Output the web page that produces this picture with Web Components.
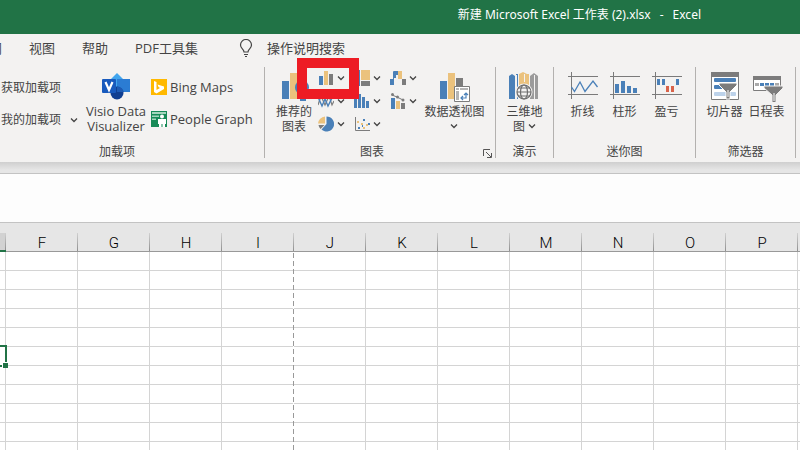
<!DOCTYPE html>
<html lang="zh-CN">
<head>
<meta charset="utf-8">
<title>新建 Microsoft Excel 工作表 (2).xlsx - Excel</title>
<style>
html, body { height: 100%; margin: 0; }
body { font: 12px/16px "Open Sans", "Noto Sans CJK SC", sans-serif; color: #444; background: #fff; overflow: hidden; }
</style>
</head>
<body>
<excel-window></excel-window>
<script>
const BLUE = '#4a80b8', YEL = '#ebc27d', GREY = '#7c7c7c';
const axes = '<path d="M1 6.5h30M1 24.5h30M4.5 2v27" stroke="#7a7a7a" fill="none"/>';
const ICONS = {
  bulb: [14, 18, '<path d="M5 13c0-3-3.500-3.500-3.500-7a5.500 5.500 0 0 1 11 0c0 3.500-3.500 4-3.500 7zM5 15.500h4M6 17.500h2" fill="none" stroke="#444" stroke-width="1.200"/>'],
  chevron: [8, 8, '<path d="M1 2.500 4 5.500 7 2.500" fill="none" stroke="#444" stroke-width="1.300"/>'],
  launcher: [9, 9, '<path d="M.5 7V.5H7M3 3l5 5M8.500 4v4.500H4" fill="none" stroke="#555"/>'],
  visio: [32, 32, '<path d="M17 3 27 13 17 23 7 13z" fill="#41a5ee"/><path d="M17 9h13v13H17z" fill="#2b7cd3"/><circle cx="17" cy="23" r="6.500" fill="#103f91"/><path d="M17 16.500V22h6.500A6.500 6.500 0 0 0 17 16.500z" fill="#1c5ab4"/><rect x="2" y="9" width="14" height="14" rx="1" fill="#185abd"/><path d="m5.500 12 3.500 8 3.500-8" fill="none" stroke="#fff" stroke-width="2.200"/>'],
  bing: [16, 16, '<path d="M0 0h16v16H0z" fill="#ffb900"/><path d="m3 2 2.500 1v8l-2.500 2zm0 11 2.500-2L9 9 7.500 8 6.500 5.500 13 7.500V10l-7.500 4.500z" fill="#fff"/>'],
  people: [16, 16, '<path d="M0 0h16v16H0z" fill="#178a57"/><path d="M1 1h14v2H1zM1 4.500h7v1.500H1zM1 7.500h4v1.500H1z" fill="#a5d5bd"/><circle cx="11" cy="5.500" r="2" fill="#fff"/><path d="M7 8h8v5h-1v3h-2.500v-3h-1v3H8v-3H7z" fill="#fff"/>'],
  recommend: [32, 32, `<path d="M4 11h7v18H4z" fill="${BLUE}"/><path d="M12 3h8v26h-8z" fill="${YEL}"/><circle cx="24" cy="17.500" r="7" fill="${BLUE}"/><path d="M22 24h6v7h-6z" fill="${BLUE}"/>`],
  column: [16, 16, `<path d="M1 6h4v9H1z" fill="${BLUE}"/><path d="M6 1h4v14H6z" fill="${YEL}"/><path d="M11 4h4v11h-4z" fill="${GREY}"/>`],
  treemap: [16, 16, `<path d="M0 0h6v16H0z" fill="${BLUE}"/><path d="M7 0h9v10H7z" fill="${YEL}"/><path d="M7 11h9v5H7z" fill="${GREY}"/>`],
  waterfall: [16, 16, `<path d="M0 9h4v6H0zM4 2h4v3H6v3H4z" fill="${BLUE}"/><path d="M8 1h4v8H8z" fill="${YEL}"/><path d="M12 9h4v6h-4z" fill="${GREY}"/><path d="M3.500 9V1.500H8" stroke="${BLUE}" fill="none"/>`],
  line: [16, 16, `<path d="m0 12 3-9 4 9 4-9 3 9 2-4" fill="none" stroke="${GREY}" stroke-width="1.200"/><path d="m0 4 4 9 3-7 3 7 4-8 2-2" fill="none" stroke="${BLUE}" stroke-width="1.400"/>`],
  histogram: [16, 16, `<path d="M0 5h3v10H0zM4 1h3v14H4zM8 4h3v11H8zM12 8h3v7h-3z" fill="${BLUE}"/>`],
  combo: [16, 16, `<path d="M1 5h4v11H1z" fill="${BLUE}"/><path d="M6 8h4v8H6z" fill="${YEL}"/><path d="M11 10h4v6h-4z" fill="${GREY}"/><path d="m2 2 5 2 6 3" fill="none" stroke="${GREY}"/><circle cx="2.500" cy="1.500" r="1.500" fill="${GREY}"/><circle cx="7.500" cy="4" r="1.500" fill="${GREY}"/><circle cx="13" cy="7" r="1.500" fill="${GREY}"/>`],
  pie: [16, 16, `<path d="M8.500 8V.5A7.500 7.500 0 1 1 3.500 13.500z" fill="${BLUE}"/><path d="M7 7.500H0A7.500 7.500 0 0 1 7 .5z" fill="${YEL}"/><path d="M6.500 9H.5a7 7 0 0 0 2 4z" fill="${GREY}"/>`],
  scatter: [16, 16, `<path d="M1.500 1v13.500H16" fill="none" stroke="${GREY}"/><path d="M3 5h2v2H3zM7 7h2v2H7zM12 8h2v2h-2zM9 11h2v2H9z" fill="${YEL}"/><path d="M9 3h2v2H9zM14 7h2v2h-2zM4 11h2v2H4zM8 9h1v2H8z" fill="${BLUE}"/>`],
  pivot: [32, 32, `<path d="M1 11h7v18H1z" fill="${BLUE}"/><path d="M9 3h7v26H9z" fill="${YEL}"/><path d="M17 8h7v8h-7z" fill="${GREY}"/><path d="M15.500 16.500h15v15h-15z" fill="#fff" stroke="${GREY}"/><path d="M17 18h3v2h-3zM21 18h8v2h-8zM17 21h3v9h-3z" fill="#b5b5b5"/><path d="M22 28h5v-5M24 26l-2 2 2 2M25 25l2-2 2 2" fill="none" stroke="${BLUE}" stroke-width="1.200"/>`],
  map3d: [32, 32, `<path d="M1 6l3-2 3 2v23H1zM8 4h2v25H8z" fill="${BLUE}"/><path d="M11 4l4-2 4 2v12h-8zM18 4h3v12h-3z" fill="${YEL}"/><path d="M22 6l4-3 4 3v23h-8z" fill="#9b9b9b"/><path d="M8.500 5v24M26.500 5v24M16.500 4v8" stroke="#f3f2f1"/><circle cx="16" cy="22" r="8.500" fill="#f3f2f1"/><g fill="none" stroke="#6d6d6d" stroke-width="1.200"><circle cx="16" cy="22" r="7"/><ellipse cx="16" cy="22" rx="3.500" ry="7"/><path d="M9 22h14M10 18h12M10 26h12"/></g>`],
  spark: [32, 32, axes + `<path d="m4.500 17 3 4.500L13 12l5 9.500L26 11l4.500 6" fill="none" stroke="${BLUE}" stroke-width="1.300"/>`],
  sparkcol: [32, 32, axes + `<path d="M6 14h4v9H6zM12 11h4v12h-4zM18 16h4v7h-4zM24 18h4v5h-4z" fill="${BLUE}"/>`],
  winloss: [32, 32, axes + `<path d="M6 9h3v6H6zM11 9h3v6h-3zM25 9h3v6h-3z" fill="${BLUE}"/><path d="M15 16h3v6h-3zM20 16h3v6h-3z" fill="#d9634a"/>`],
  slicer: [32, 32, `<path d="M2.500 2.500h27v27h-27z" fill="#fff" stroke="${GREY}"/><path d="M2 2h28v5H2z" fill="${GREY}"/><rect x="5" y="8" width="22" height="4" rx="1" fill="${BLUE}"/><rect x="5" y="15" width="9" height="4" rx="1" fill="${BLUE}"/><rect x="5" y="22" width="22" height="4" rx="1" fill="#bcd2ea"/><path d="M10 13h18v2l-7 7v7h-4v-7l-7-7z" fill="${GREY}" stroke="#fff"/><path d="M19 20v7" stroke="#fff"/>`],
  timeline: [32, 32, `<path d="M2.500 6.500h27v14h-27z" fill="#fff" stroke="${GREY}"/><path d="M2 6h28v4H2z" fill="${GREY}"/><path d="M4 13h4v3H4zM24 13h4v3h-4z" fill="#aaa"/><path d="M9 13h4v3H9zM14 13h4v3h-4zM19 13h4v3h-4z" fill="${BLUE}"/><path d="M13 16h19v2l-7 7v8h-4v-8l-8-7z" fill="${GREY}" stroke="#f3f2f1"/><path d="M23 23v8" stroke="#fff"/>`]
};

const shadow = (el, html) => { el.attachShadow({ mode: 'open' }).innerHTML = html; };
const RESET = 'button{font:inherit;color:inherit;background:none;border:0;padding:0;margin:0;cursor:default;white-space:nowrap}';

customElements.define('ui-icon', class extends HTMLElement {
  connectedCallback() {
    const [w, h, art] = ICONS[this.getAttribute('name')];
    shadow(this, `<style>:host{display:inline-flex;flex:none}svg{display:block}</style>
      <svg width="${w}" height="${h}" viewBox="0 0 ${w} ${h}" aria-hidden="true">${art}</svg>`);
  }
});

customElements.define('title-bar', class extends HTMLElement {
  connectedCallback() {
    shadow(this, `<style>
      :host{display:flex;justify-content:flex-end;align-items:center;gap:9px;height:34px;padding:0 99px 4px 0;box-sizing:border-box;background:#217346;color:#fff;font-family:"Noto Sans","Noto Sans CJK SC",sans-serif;white-space:nowrap}
      </style><slot></slot>`);
  }
});

customElements.define('tab-strip', class extends HTMLElement {
  connectedCallback() {
    shadow(this, `<style>${RESET}
      :host{display:flex;align-items:center;height:28px;background:#f3f2f1;font-size:13px;line-height:20px;overflow:hidden}
      nav{display:flex;gap:27px;margin-left:-24px}
      .tell{display:flex;align-items:center;gap:14px;margin-left:41px}
      </style>
      <nav><button>审阅</button><button>视图</button><button>帮助</button><button>PDF工具集</button></nav>
      <button class="tell"><ui-icon name="bulb"></ui-icon>操作说明搜索</button>`);
  }
});

customElements.define('ribbon-group', class extends HTMLElement {
  connectedCallback() {
    shadow(this, `<style>${RESET}
      :host{display:flex;flex-direction:column;flex:none;box-sizing:border-box;border-right:1px solid #b3b1af;height:91px}
      .body{display:flex;flex:1;justify-content:center;align-items:flex-start}
      footer{display:flex;line-height:12px;align-items:flex-end}
      span{flex:1;text-align:center}
      button{padding:0 3px 0 4px;display:flex}
      </style>
      <div class="body"><slot></slot></div>
      <footer><span>${this.getAttribute('label')}</span>${this.hasAttribute('launcher') ? '<button aria-label="查看所有图表"><ui-icon name="launcher"></ui-icon></button>' : ''}</footer>`);
  }
});

customElements.define('large-button', class extends HTMLElement {
  connectedCallback() {
    shadow(this, `<style>${RESET}
      :host{display:block;flex:none}
      button{display:flex;flex-direction:column;align-items:center;gap:2px;width:100%;padding-top:3px;line-height:15px}
      </style><button><ui-icon name="${this.getAttribute('icon')}"></ui-icon><span><slot></slot></span></button>`);
  }
});

customElements.define('small-button', class extends HTMLElement {
  connectedCallback() {
    const icon = this.getAttribute('icon'), name = this.getAttribute('name');
    shadow(this, `<style>${RESET}
      :host{display:block}
      button{display:flex;align-items:center;gap:3px;height:100%}
      .menu{margin-left:var(--menu-gap,0)}
      </style><button ${name ? `aria-label="${name}"` : ''}>${icon ? `<ui-icon name="${icon}"></ui-icon>` : ''}<slot></slot>${this.hasAttribute('menu') ? '<ui-icon class="menu" name="chevron"></ui-icon>' : ''}</button>`);
  }
});

customElements.define('excel-ribbon', class extends HTMLElement {
  connectedCallback() {
    shadow(this, `<style>
      :host{display:flex;height:100px;padding-top:5px;box-sizing:border-box;background:#f3f2f1;overflow-x:clip}
      .addins{width:295px;margin-left:-30px}
      .stack{display:grid;grid-auto-rows:32px;margin-top:4px}
      .mine{width:113px;--menu-gap:6px;margin-top:5px}
      .mine small-button{padding-left:31px}
      .apps{flex:1;padding-left:2px}
      .visio{width:66px}
      .latin{font-size:13px}
      .charts{width:231px}
      .gallery{display:grid;grid-template-columns:repeat(3,36px);grid-auto-rows:23px;position:relative;margin:-1px 0 0 5px}
      .mark{position:absolute;left:-21px;top:-8px;width:62px;height:41px;box-sizing:border-box;border:10px solid #ed1c24;pointer-events:none}
      .rec{width:38px}
      .pivot{width:61px;margin-left:-2px}
      .tour{width:58px}.sparks{width:142px}.filters{width:100px}
      .w{width:42px}
      large-button ui-icon{vertical-align:1px}
      </style>
      <ribbon-group class="addins" label="加载项">
        <div class="stack mine"><small-button>获取加载项</small-button><small-button menu>我的加载项</small-button></div>
        <large-button class="visio latin" icon="visio">Visio Data<br>Visualizer</large-button>
        <div class="stack apps latin"><small-button icon="bing">Bing Maps</small-button><small-button icon="people">People Graph</small-button></div>
      </ribbon-group>
      <ribbon-group class="charts" label="图表" launcher>
        <large-button class="rec" icon="recommend">推荐的<br>图表</large-button>
        <div class="gallery">
          <small-button icon="column" name="柱形图" menu></small-button><small-button icon="treemap" name="层次结构图" menu></small-button><small-button icon="waterfall" name="瀑布图" menu></small-button>
          <small-button icon="line" name="折线图" menu></small-button><small-button icon="histogram" name="统计图" menu></small-button><small-button icon="combo" name="组合图" menu></small-button>
          <small-button icon="pie" name="饼图" menu></small-button><small-button icon="scatter" name="散点图" menu></small-button>
          <div class="mark"></div>
        </div>
        <large-button class="pivot" icon="pivot">数据透视图<br><ui-icon name="chevron"></ui-icon></large-button>
      </ribbon-group>
      <ribbon-group class="tour" label="演示">
        <large-button icon="map3d">三维地<br>图 <ui-icon name="chevron"></ui-icon></large-button>
      </ribbon-group>
      <ribbon-group class="sparks" label="迷你图">
        <large-button class="w" icon="spark">折线</large-button><large-button class="w" icon="sparkcol">柱形</large-button><large-button class="w" icon="winloss">盈亏</large-button>
      </ribbon-group>
      <ribbon-group class="filters" label="筛选器">
        <large-button class="w" icon="slicer">切片器</large-button><large-button class="w" icon="timeline">日程表</large-button>
      </ribbon-group>`);
  }
});

customElements.define('formula-bar', class extends HTMLElement {
  connectedCallback() {
    shadow(this, `<style>
      :host{display:block;padding:11px 0 10px;background:linear-gradient(#cfcfcf,#e6e6e6 8px)}
      input{display:block;width:100%;height:50px;box-sizing:border-box;border:solid #c3c3c3;border-width:1px 0;border-radius:0;padding:0 8px;background:#fdfdfd;outline:0;font:inherit}
      </style><input type="text" aria-label="编辑栏">`);
  }
});

customElements.define('sheet-grid', class extends HTMLElement {
  connectedCallback() {
    const cols = ['', ...'FGHIJKLMNOPQRSTUVWXYZ'];
    const rows = 60;
    shadow(this, `<style>
      :host{display:block;flex:1;min-height:0;overflow:hidden;position:relative;background:#fff}
      table{border-collapse:separate;border-spacing:0;table-layout:fixed;width:1518px}
      col{width:72px}col:first-child{width:6px}
      th,td{box-sizing:border-box;height:19px;padding:0}
      th{font:300 15px/15px Roboto,sans-serif;padding-top:3px;color:#000;background:linear-gradient(#d0d0d0,#909090) right/1px 100% no-repeat #e6e6e6;border-bottom:1px solid #999}
      th:first-child{background-color:#d2d2d2;border-bottom:2px solid #217346}
      td{border:solid #d4d4d4;border-width:0 1px 1px 0}
      td:nth-child(5){border-right-color:transparent}
      .break{position:absolute;left:293px;top:19px;bottom:0;width:1px;background:repeating-linear-gradient(#fff 0 1px,#999 1px 6px,#fff 6px 8px)}
      .sel{position:absolute;left:-66px;top:112px;width:73px;height:22px;box-sizing:border-box;border:2px solid #217346}
      .sel::after{content:"";position:absolute;right:-3px;bottom:-3px;width:5px;height:5px;background:#217346;border:solid #fff;border-width:1px 0 0 1px}
      </style>
      <table><colgroup>${cols.map(() => '<col>').join('')}</colgroup>
      <thead><tr>${cols.map(c => `<th scope="col">${c}</th>`).join('')}</tr></thead>
      <tbody>${('<tr>' + '<td></td>'.repeat(cols.length) + '</tr>').repeat(rows)}</tbody></table>
      <div class="break"></div><div class="sel"></div>`);
  }
});

customElements.define('excel-window', class extends HTMLElement {
  connectedCallback() {
    shadow(this, `<style>:host{display:flex;flex-direction:column;height:100vh}title-bar,tab-strip,excel-ribbon,formula-bar{flex:none}</style>
      <title-bar><span>新建 Microsoft Excel 工作表 (2).xlsx</span><span>-</span><span>Excel</span></title-bar>
      <tab-strip></tab-strip><excel-ribbon></excel-ribbon><formula-bar></formula-bar><sheet-grid></sheet-grid>`);
  }
});
</script>
</body>
</html>
